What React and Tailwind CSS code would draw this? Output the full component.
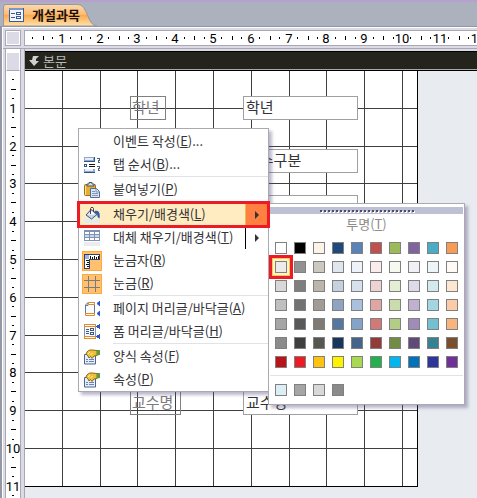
import React from "react";

// pixels in one centimetre on the rulers and on the design grid
const CM = 37.8;
const cm = (n) => Math.round(n * CM) - 1;

const range = (from, to) =>
  Array.from({ length: to - from + 1 }, (_, i) => from + i);

const themeColors = [
  ["#ffffff", "#000000", "#fbf3e8", "#1f497d", "#5c83b8", "#c0504d", "#9bbb59", "#8064a2", "#4bacc6", "#f79b57"],
  ["#ececec", "#929292", "#cbc8c0", "#dfe6ee", "#eef3f9", "#f9ecec", "#f6f9ef", "#f2eff7", "#ecf6f9", "#fffaf6"],
  ["#d8d8d8", "#7f7f7f", "#bab6ac", "#c5d1de", "#d6e1ed", "#efd2d2", "#e4eed5", "#dddbe8", "#d2eaee", "#fde6d2"],
  ["#bfbfbf", "#727272", "#a19d94", "#8ea4c1", "#abc0dc", "#dfa6a4", "#cbdcac", "#bfb1cf", "#a3d6e3", "#fbcba8"],
  ["#a5a5a5", "#595959", "#7f7b74", "#56779f", "#84a3c9", "#cf7a78", "#b4cd86", "#a08cb8", "#75bfd2", "#f8b47d"],
  ["#8b8b8b", "#3f3f3f", "#57564f", "#17365d", "#446489", "#933b38", "#718c45", "#5f4a7a", "#368192", "#7b4f2b"],
  ["#ba1419", "#ed1c24", "#ffc20e", "#fff200", "#a8d94f", "#22b14c", "#00b7ef", "#0072bc", "#2f3699", "#6f3198"],
];

const recentColors = ["#daeef3", "#a5a5a5", "#d8d8d8", "#8b8b8b"];

const FormIcon = () => (
  <svg width="15" height="14" viewBox="0 0 15 14" shapeRendering="crispEdges">
    <rect width="15" height="14" fill="#3c5a9c" />
    <rect x="1" y="2" width="13" height="11" fill="#f2f6fc" />
    <rect width="14" height="2" fill="#7f97c8" />
    <path d="M2 5.500h4M2 9.500h4" stroke="#3c5a9c" />
    <path d="M7.500 4.500h4v2h-4zM7.500 8.500h4v2h-4z" fill="none" stroke="#3c5a9c" />
  </svg>
);

const TabOrderIcon = () => (
  <svg width="16" height="16" viewBox="0 0 16 16" shapeRendering="crispEdges">
    <rect width="11" height="4" fill="#8fa8cf" />
    <rect x="1" y="1" width="8" height="2" fill="#e6edf8" />
    <rect x="10" width="1" height="4" fill="#34507f" />
    <rect x="0" y="4" width="11" height="1" fill="#34507f" />
    <rect x="0" y="7" width="3" height="3" fill="#34507f" />
    <rect x="1" y="8" width="1" height="1" fill="#fff" />
    <path d="M5 7.500h6M5 9.500h6" stroke="#111" />
    <rect y="12" width="11" height="3" fill="#8fa8cf" />
    <rect x="1" y="12" width="8" height="2" fill="#e6edf8" />
    <rect y="15" width="11" height="1" fill="#34507f" />
    <path d="M13 1.500h2v2h-1v2h2M13 9.500h2v2h-1v2h2" fill="none" stroke="#48618f" />
  </svg>
);

const PasteIcon = () => (
  <svg width="16" height="16" viewBox="0 0 16 16">
    <rect x="0.500" y="2.500" width="11" height="11" rx="1" fill="#e3b036" stroke="#9b7019" />
    <path d="M1.500 4v9" stroke="#fce08a" />
    <path d="M3 4V2h2V.5h3V2h2v2z" fill="#d9dde6" stroke="#4c5361" />
    <path d="M6.500 6.500h6l3 3v6h-9z" fill="#dbe6f6" stroke="#576b90" />
    <path d="M12 7v3h3M8 9.500h3M8 11.500h6M8 13.500h6" fill="none" stroke="#7f96bd" />
  </svg>
);

const FillIcon = () => (
  <svg width="16" height="16" viewBox="0 0 16 16">
    <rect y="12" width="16" height="4" fill="#daeef3" />
    <path d="M7 2.500l6 5-5.500 4.500L2 8z" fill="#c6d3e8" stroke="#40557d" />
    <path d="M4 7.500l4-3.500 3 3.500z" fill="#fff" />
    <path d="M6.500 7V1.500c0-1.500 3-1.500 3 0V5" fill="none" stroke="#444" />
    <path d="M10.500 4c4-1 6 1 5 7.500-1-1-2-1-2-2 0-2-1-3.500-3-3.500z" fill="#2d5cab" />
  </svg>
);

const AltFillIcon = () => (
  <svg width="16" height="16" viewBox="0 0 16 16" shapeRendering="crispEdges">
    <rect x="0" y="0" width="16" height="11" fill="#7d92b5" />
    <path d="M1 2.500h4M6 2.500h4M11 2.500h4M1 8.500h4M6 8.500h4M11 8.500h4" stroke="#fff" strokeWidth="2" />
    <path d="M1 5.500h4M6 5.500h4M11 5.500h4" stroke="#cbd7ea" strokeWidth="2" />
    <rect y="12" width="16" height="4" fill="#ececec" />
  </svg>
);

const RulerIcon = () => (
  <svg width="16" height="16" viewBox="0 0 16 16" shapeRendering="crispEdges">
    <path d="M0 1h16v6H6v9H0z" fill="#2f4368" />
    <path d="M5 2h10v4H5zM1 6h4v9H1z" fill="#fff" />
    <path d="M1 2h4v4H1z" fill="#9fb4d8" />
    <path d="M6.500 3v3M8.500 4v2M10.500 3v3M12.500 4v2M14.500 3v3M2 7.500h3M3 9.500h2M2 11.500h3M3 13.500h2" stroke="#111" />
  </svg>
);

const GridIcon = () => (
  <svg width="16" height="16" viewBox="0 0 16 16" shapeRendering="crispEdges">
    <path d="M4.500 0v16M11.500 0v16M0 4.500h16M0 11.500h16" stroke="#7a7a80" />
  </svg>
);

const BlueArrows = () => (
  <path d="M16 0v5l-3-2.500zM16 10v5l-3-2.500z" fill="#2858c8" stroke="#2858c8" />
);

const PageHeaderIcon = () => (
  <svg width="16" height="16" viewBox="0 0 16 16">
    <path d="M4 1.500h6.500v12h-9V4z" fill="#f7faff" stroke="#63789f" />
    <path d="M1.500 4.500H4v-3" fill="none" stroke="#63789f" />
    <path d="M4.500 1.500h6v2h-6zM1.500 12.500h9v2h-9z" fill="#fff" stroke="#e58a2b" />
    <BlueArrows />
  </svg>
);

const FormHeaderIcon = () => (
  <svg width="16" height="16" viewBox="0 0 16 16" shapeRendering="crispEdges">
    <rect x="0" y="0" width="12" height="15" fill="#7d92b5" />
    <rect x="1" y="3" width="10" height="9" fill="#f4f7fd" />
    <path d="M.5.500h11v2H.5zM.5 12.500h11v2H.5z" fill="#fff" stroke="#e58a2b" />
    <path d="M2 5.500h3M2 7.500h3M2 9.500h3" stroke="#40557d" />
    <path d="M6.500 4.500h3v2h-3zM6.500 8.500h3v2h-3z" fill="none" stroke="#40557d" />
    <BlueArrows />
  </svg>
);

const PropertyIcon = () => (
  <svg width="16" height="16" viewBox="0 0 16 16">
    <path d="M.5 5.500h11v9.500H.5z" fill="#e6eefb" stroke="#4e6591" />
    <path d="M2 10.500h2M5 10.500h5M2 12.500h2M5 12.500h5" stroke="#6784b8" />
    <path d="M2 5c1-3 3-4.500 6-4l5 .5v5l-3 .5-2 2.500-1.500-2-1.500 1.500-1-2z" fill="#eec03a" stroke="#8f6a14" />
    <path d="M4 5l2-2M6.500 6l2-2" stroke="#fff3b0" />
    <path d="M13 1h3v5l-3 .5z" fill="#5a9c45" />
  </svg>
);

const menuItems = [
  { label: "이벤트 작성", accel: "E", tail: "..." },
  { label: "탭 순서", accel: "B", tail: "...", icon: <TabOrderIcon /> },
  { separator: true },
  { label: "붙여넣기", accel: "P", icon: <PasteIcon /> },
  { separator: true },
  { label: "채우기/배경색", accel: "L", icon: <FillIcon />, submenu: true, active: true },
  { label: "대체 채우기/배경색", accel: "T", icon: <AltFillIcon />, submenu: true },
  { label: "눈금자", accel: "R", icon: <RulerIcon />, checked: true },
  { label: "눈금", accel: "R", icon: <GridIcon />, checked: true },
  { separator: true },
  { label: "페이지 머리글/바닥글", accel: "A", icon: <PageHeaderIcon /> },
  { label: "폼 머리글/바닥글", accel: "H", icon: <FormHeaderIcon /> },
  { separator: true },
  { label: "양식 속성", accel: "F", icon: <PropertyIcon /> },
  { label: "속성", accel: "P", icon: <PropertyIcon /> },
];

const Tab = () => (
  <div className="relative flex h-[23px] w-24 items-center gap-2 pl-1.5">
    <svg className="absolute inset-0" width="96" height="23" viewBox="0 0 96 23">
      <defs>
        <linearGradient id="tab" x1="0" y1="0" x2="0" y2="1">
          <stop offset="0" stopColor="#fbd9ae" />
          <stop offset="0.450" stopColor="#fdbd78" />
          <stop offset="0.500" stopColor="#fba94c" />
          <stop offset="1" stopColor="#fee3ae" />
        </linearGradient>
      </defs>
      <path d="M.5 23V4Q.5 1.500 3 1.500H75C85 1.500 84 23 94 23z" fill="url(#tab)" stroke="#9b96a0" />
    </svg>
    <span className="relative">
      <FormIcon />
    </span>
    <button className="relative text-[13px] leading-4 font-bold whitespace-nowrap text-[#1a1008]">
      개설과목
    </button>
  </div>
);

const HorizontalRuler = () => (
  <svg className="w-full overflow-visible" height="14" shapeRendering="crispEdges">
    {range(0, 12).map((n) => (
      <g key={n}>
        {n > 0 && (
          <text x={cm(n)} y="12" textAnchor="middle" className="font-[Roboto] text-[13px]">
            {n}
          </text>
        )}
        <rect x={cm(n + 0.25) - 1} y="6" width="1" height="2" />
        <rect x={cm(n + 0.5)} y="5" width="1" height="4" />
        <rect x={cm(n + 0.75)} y="6" width="1" height="2" />
      </g>
    ))}
  </svg>
);

const VerticalRuler = () => (
  <svg className="h-full overflow-visible" width="14" shapeRendering="crispEdges">
    {range(0, 11).map((n) => (
      <g key={n}>
        {n > 0 && (
          <text x="7" y={cm(n) + 5} textAnchor="middle" className="font-[Roboto] text-[13px]">
            {n}
          </text>
        )}
        <rect x="6" y={cm(n + 0.25)} width="2" height="1" />
        <rect x="5" y={cm(n + 0.5)} width="5" height="1" />
        <rect x="6" y={cm(n + 0.75)} width="2" height="1" />
      </g>
    ))}
  </svg>
);

const inputClass =
  "absolute left-[218px] h-6 w-[115px] border border-[#a0a0a0] bg-white px-0.5 pb-1 text-[15px] text-[#333338] outline-none";
const labelClass =
  "absolute left-[105px] h-6 border border-[#808080] px-px text-[15px] leading-5 whitespace-nowrap text-[#7c7c80]";

const DesignSurface = () => (
  <div className="relative h-[416px] w-[393px] border-r border-b border-black bg-white">
    <svg className="absolute inset-0" width="392" height="415" shapeRendering="crispEdges">
      {range(1, 10).map((n) => (
        <g key={n} fill="#3f3f3f">
          <rect x={cm(n)} y="0" width="1" height="415" />
          <rect x="0" y={cm(n)} width="392" height="1" />
        </g>
      ))}
    </svg>
    <label htmlFor="grade" className={`${labelClass} top-[25px] w-9`}>
      학년
    </label>
    <input id="grade" className={`${inputClass} top-[25px]`} defaultValue="학년" />
    <input aria-label="이수구분" className={`${inputClass} top-[78px]`} defaultValue="이수구분" />
    <input aria-label="과목명" className={`${inputClass} top-[124px]`} />
    <label htmlFor="professor" className={`${labelClass} top-[320px] w-[51px]`}>
      교수명
    </label>
    <input id="professor" className={`${inputClass} top-[320px]`} defaultValue="교수명" />
  </div>
);

const MenuItem = ({ label, accel, tail, icon, checked, submenu, active }) => (
  <button
    role="menuitem"
    className={`relative flex h-[23px] w-full items-center text-left text-[13px] leading-4 whitespace-nowrap text-[#333338] ${
      active ? "bg-[#ffecc0]" : ""
    }`}
  >
    <span className="flex w-[34px] shrink-0 pl-[3px]">
      {icon && (
        <span
          className={`flex size-5 items-center justify-center ${
            checked ? "bg-[#ffc070] outline-1 -outline-offset-1 outline-[#ffa93c]" : ""
          }`}
        >
          {icon}
        </span>
      )}
    </span>
    <span className="flex-1 pb-0.5">
      {label}(<u>{accel}</u>){tail}
    </span>
    {submenu && (
      <span
        className={`flex h-full w-[23px] items-center justify-center border-l ${
          active ? "border-[#e8c050] bg-[#ff8040]" : "border-black"
        }`}
      >
        <svg width="4" height="8" viewBox="0 0 4 8">
          <path d="M0 0l4 4-4 4z" fill="#333" />
        </svg>
      </span>
    )}
    {active && (
      <span className="absolute -inset-x-0.5 -inset-y-0.5 z-20 border-3 border-[#ed1c24]" />
    )}
  </button>
);

const ContextMenu = () => (
  <div
    role="menu"
    className="absolute top-32 left-[78px] w-[191px] border border-[#a7abb0] bg-white pt-px shadow-[3px_3px_3px_rgba(90,80,130,0.4)]"
  >
    {menuItems.map((item, i) =>
      item.separator ? (
        <div key={i} className="ml-[34px] h-0.5 border-t border-[#e2e3e6]" />
      ) : (
        <MenuItem key={i} {...item} />
      )
    )}
  </div>
);

const Swatch = ({ color, selected }) => (
  <button
    aria-label={color}
    className={`size-3 border border-[#808080] ${
      selected
        ? "relative shadow-[0_0_0_2px_#fff2c8,0_0_0_3px_#f0cc58,0_0_0_6px_#ed1c24]"
        : ""
    }`}
    style={{ backgroundColor: color }}
  />
);

const ColorPalette = () => (
  <div className="absolute top-[203px] left-[268px] w-[197px] border border-[#a7abb0] bg-white px-px pt-[3px] pb-2 shadow-[3px_3px_3px_rgba(90,80,130,0.4)]">
    <div className="flex h-[7px] items-center justify-center gap-0.5 bg-[#bec0d3]">
      {range(1, 24).map((n) => (
        <span key={n} className="size-0.5 bg-[#4b4b6b] shadow-[1px_1px_0_#fff]" />
      ))}
    </div>
    <button className="block h-7 w-full pb-2 text-center text-[13px] leading-5 text-[#8c8c8c]">
      투명(<u>T</u>)
    </button>
    <div className="grid grid-cols-[repeat(10,12px)] gap-[7px] pl-[5px]">
      {themeColors.flat().map((color, i) => (
        <Swatch key={i} color={color} selected={i === 10} />
      ))}
    </div>
    <div className="mt-[7px] mb-2 border-t border-[#e2e3e6]" />
    <div className="flex gap-[7px] pl-[5px]">
      {recentColors.map((color) => (
        <Swatch key={color} color={color} />
      ))}
    </div>
  </div>
);

export default function App() {
  return (
    <div className="relative flex h-screen flex-col overflow-hidden bg-[#e8ebf0] font-['Noto_Sans_CJK_KR','Liberation_Sans',sans-serif]">
      <header className="shrink-0 border-t-2 border-[#b79fd0] bg-[#abb1bd] pt-px pl-[3px]">
        <Tab />
      </header>
      <div className="flex min-h-0 flex-1 border-t border-[#9295a3]">
        <div className="w-0.5 shrink-0 bg-[#9498a4]" />
        <div className="flex min-w-0 flex-1 flex-col border-t border-l border-white">
          <div className="flex shrink-0 gap-[3px] bg-[#dbdae6] py-0.5 pl-0.5">
            <div className="h-4 w-4 shrink-0 border border-[#a7a8b2] bg-[#dbdae6] outline-1 -outline-offset-2 outline-white" />
            <div className="min-w-0 flex-1 border-y border-l border-[#a7a8b2] bg-white">
              <HorizontalRuler />
            </div>
          </div>
          <div className="flex min-h-0 flex-1 border-t border-[#a7a8b2] bg-[#dbdae6]">
            <div className="ml-0.5 flex w-4 shrink-0 flex-col border-x border-[#a7a8b2] bg-white pt-[3px]">
              <div className="h-[19px] shrink-0 border border-white border-b-[#a7a8b2] bg-[#dbdae6]" />
              <div className="min-h-0 flex-1">
                <VerticalRuler />
              </div>
            </div>
            <div className="ml-[3px] flex min-w-0 flex-1 flex-col border-l border-[#a7a8b2] pt-0.5">
              <main className="min-h-0 flex-1 bg-[#e8ebf0]">
                <div className="flex h-5 items-center gap-1 border-t border-b border-black bg-[#24241c] pl-1 text-[13px] leading-4 text-[#b8b8b8] shadow-[inset_0_-1px_0_#a7a8a8]">
                  <svg width="10" height="10" viewBox="0 0 10 10">
                    <path d="M4 0h6L7 3v2h3L5 10 0 4h3z" fill="#d0d0d0" />
                  </svg>
                  본문
                </div>
                <DesignSurface />
              </main>
            </div>
          </div>
        </div>
      </div>
      <ContextMenu />
      <ColorPalette />
    </div>
  );
}
